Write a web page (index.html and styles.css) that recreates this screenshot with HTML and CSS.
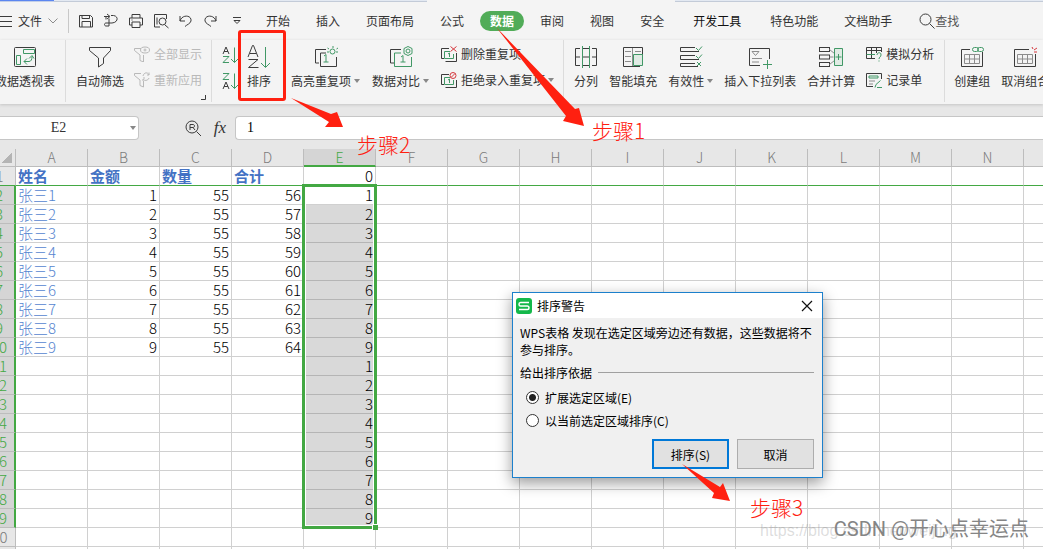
FILE: index.html
```html
<!DOCTYPE html>
<html lang="zh-CN">
<head>
<meta charset="utf-8">
<title>WPS表格</title>
<link rel="stylesheet" href="styles.css">
</head>
<body>
<div class="doc-tabs"><span class="doc-tab doc-tab-active"></span><span class="doc-tab doc-tab-wide"></span><span class="doc-tab doc-tab-current"></span><span class="doc-tab doc-tab-rest"></span></div>

<header class="menu">
  <button class="file"><svg class="i" width="12" height="12"><path d="M0 1.5h12M0 6.500h12M0 11.500h12"/></svg>文件<svg class="i soft" width="10" height="8"><path d="M.5 1.500l4.500 4.500 4.500-4.500"/></svg></button>
  <div class="quick">
    <button aria-label="保存"><svg class="i" width="16" height="16" viewBox="0 0 16 16"><path d="M1.500 2.500h11l2 2v9.500h-13zM4 2.500v3h7.500v-3M4 14V8.500h8.500V14"/></svg></button>
    <button aria-label="输出"><svg class="i" width="16" height="16" viewBox="0 0 16 16"><path d="M1 3.500h5M4 1l3 2.500L4 6M8 2.500c8-1 8 7 1 7.500H3c-2 0-2 3 0 3h3V5.500M3 3.500v3"/></svg></button>
    <button aria-label="打印"><svg class="i" width="16" height="16" viewBox="0 0 16 16"><path d="M4 5V1.500h8V5M4 12H1.500V5h13v7H12M4 9h8v5.500H4zM3.500 7h1"/></svg></button>
    <button aria-label="打印预览"><svg class="i" width="16" height="16" viewBox="0 0 16 16"><path d="M7 14H1.500V1.500h12V6M4 4.500v7M12 12l3.500 3"/><circle cx="9.500" cy="8.500" r="3.500"/></svg></button>
    <button aria-label="撤销"><svg class="i" width="16" height="16" viewBox="0 0 16 16"><path d="M2 3v5h5M2 8c2-7 12-6 11 0-1 3-4 3.500-6 5.500"/></svg></button>
    <button aria-label="恢复"><svg class="i" width="16" height="16" viewBox="0 0 16 16"><path d="M13 3v5H8M13 8C11 1 1 2 2 8c1 3 4 3.500 6 5.500"/></svg></button>
    <button aria-label="更多"><svg class="i" width="8" height="8" viewBox="0 0 8 8"><path d="M0 .5h8M1 3.500l3 3 3-3z"/></svg></button>
  </div>
  <nav class="tabs">
    <button>开始</button><button>插入</button><button>页面布局</button><button>公式</button><button class="active">数据</button><button>审阅</button><button>视图</button><button>安全</button><button class="strong">开发工具</button><button>特色功能</button><button>文档助手</button>
  </nav>
  <button class="search"><svg class="i" width="16" height="16" viewBox="0 0 16 16"><circle cx="6.500" cy="6.500" r="5.500"/><path d="M10.500 10.500l5 5"/></svg>查找</button>
</header>

<div class="ribbon">
  <div class="group first">
    <button class="big"><svg class="i" width="24" height="24" viewBox="0 0 24 24"><rect x="1.500" y="2.500" width="21" height="19" rx="1"/><path class="g" d="M10.500 4.500h11v4h-11zM3.500 10.500h4v9h-4zM11 16.500h5c2 0 3-2 3-5M14 13.500l-3 3 3 3M16 13.500l3-3 2 3"/></svg>数据透视表</button>
  </div>
  <div class="group filter">
    <button class="big"><svg class="i" width="24" height="24" viewBox="0 0 24 24"><path d="M1.500 2.500h21v3l-7 7.500v5.500l-5 3.500v-9l-9-7.500z"/></svg>自动筛选</button>
    <div class="stack">
      <button class="small" disabled><svg class="i" width="16" height="16" viewBox="0 0 16 16"><path d="M7 2.500H.5v2L6 9v5.500l3.500 1.500V9"/><ellipse cx="11" cy="4" rx="4.500" ry="3"/><circle cx="11" cy="4" r="1"/></svg>全部显示</button>
      <button class="small" disabled><svg class="i" width="16" height="16" viewBox="0 0 16 16"><path d="M7 1.500H.5v2L6 8v5.500L9.500 15V9M9 4c1-4 5-4 6-1V.5M15 3h-2M15 6c-1 3-5 3-6 1v2M9 6h2"/></svg>重新应用</button>
    </div>
    <svg class="launcher i" width="5" height="5"><path d="M0 4.500h4.500V0"/></svg>
  </div>
  <div class="group sorting">
    <div class="stack sorts">
      <button aria-label="升序"><svg class="i" width="17" height="18" viewBox="0 0 17 18"><path d="M1 8l3-7 3 7M2 5.500h4"/><path class="g" d="M1 10.500h6l-6 6h6M12.500 1.500v15M9 13l3.500 3.500L16 13"/></svg></button>
      <button aria-label="降序"><svg class="i" width="17" height="18" viewBox="0 0 17 18"><path class="g" d="M1 1.500h6l-6 6h6M12.500 1.500v15M9 13l3.500 3.500L16 13"/><path d="M1 17l3-7 3 7M2 14.500h4"/></svg></button>
    </div>
    <button class="big sort"><svg class="i" width="24" height="24" viewBox="0 0 24 24"><path d="M1 12L5.500.5h1L11 12M3 8.500h6M1.500 14.500h9.500l-9.500 8h10"/><path class="g" d="M18.500 2v20M14 18l4.500 4.500L23 18"/></svg>排序</button>
    <button class="big"><svg class="i" width="24" height="24" viewBox="0 0 24 24"><path d="M5 18H1.500V4.500H12M22.500 12v9.500h-16V8H12"/><path class="g" d="M10 11l2-1.500V17M9.500 17h5M19 1v2M13.500 3l1.500 1M24 3l-1.500 1M13 7h2M22 7h2"/><circle class="g" cx="18.500" cy="6.500" r="2.500"/></svg><span class="drop">高亮重复项</span></button>
    <button class="big"><svg class="i" width="24" height="24" viewBox="0 0 24 24"><path d="M5 18H1.500V4.500H12"/><path class="g" d="M22.500 12v9.500h-17V8H12M12 12l2-1.500V17M11.500 17h5M19 1.500l4 2v5l-4 2-4-2v-5z"/><circle class="g" cx="19" cy="6" r="2"/></svg><span class="drop">数据对比</span></button>
    <div class="stack">
      <button class="small"><svg class="i" width="16" height="16" viewBox="0 0 16 16"><path d="M3 12.500H.5v-10H8M15.500 7v8.500h-11"/><path class="g" d="M3.500 5.500H9M3.500 5.500v7h9V8M7 8l1.500-1v4"/><path class="r" d="M9.500.5l6 5M15.500.5l-6 5"/></svg>删除重复项</button>
      <button class="small"><svg class="i" width="16" height="16" viewBox="0 0 16 16"><path d="M3 12.500H.5v-10H8M15.500 8v7.500h-11"/><path class="g" d="M3.500 5.500H9M3.500 5.500v7h9V8M7 8l1.500-1v4"/><circle class="r" cx="12" cy="3.500" r="3"/><path class="r" d="M10 5.500l4-4"/></svg><span class="drop">拒绝录入重复项</span></button>
    </div>
  </div>
  <div class="group">
    <button class="big"><svg class="i" width="24" height="24" viewBox="0 0 24 24"><path d="M6 3.500H1.500v17H6M18 3.500h4.500v17H18M2 12h4M18 12h4M9 3.500h6M9 12h6M9 20.500h6"/><path class="g" d="M8.500 1v22M15.500 1v22"/></svg>分列</button>
    <button class="big"><svg class="i" width="24" height="24" viewBox="0 0 24 24"><path d="M19 21.500H2.500v-19h19V19"/><path class="soft" d="M4 6.500h6M14 6.500h6M4 11.500h6M4 16.500h6M11.500 3v18"/><path class="g tint" d="M12.500 9.500h9v11h-9z"/></svg>智能填充</button>
    <button class="big"><svg class="i" width="24" height="24" viewBox="0 0 24 24"><path d="M16 2.500H1.500v4H20M16 10.500H1.500v4H20M16 18.500H1.500v3H19"/><path class="g" d="M17 3l2.500 2.500L23 1.500M17 11l2.500 2.500L23 9.500M18 17l4 4M22 17l-4 4"/></svg><span class="drop">有效性</span></button>
    <button class="big"><svg class="i" width="24" height="24" viewBox="0 0 24 24"><path d="M12 20.500H1.500v-17h20V14"/><path class="soft" d="M4 6.500h7l-3.500 4zM4 13.500h10M4 17h7"/><path class="g" d="M19.500 15v9M15 19.500h9"/></svg>插入下拉列表</button>
    <button class="big"><svg class="i" width="24" height="24" viewBox="0 0 24 24"><rect x=".5" y="2.500" width="10" height="4"/><rect x=".5" y="10" width="10" height="4"/><rect x=".5" y="17.500" width="10" height="4"/><path class="soft" d="M10.500 4.500l5 4M10.500 12h4M10.500 19.500l5-4"/><path class="g tint" d="M15.500 3.500h8v17h-8zM19.500 9v6M16.500 12h6"/></svg>合并计算</button>
    <div class="stack">
      <button class="small"><svg class="i" width="16" height="16" viewBox="0 0 16 16"><path d="M9 12.500H.5V1.500h15V6M.5 4.500h15M5.500 1.500v11M10.500 1.500V7"/><path class="g" d="M.5 8.500H9M11 9c0-3 4.500-3 4 0 0 2-2 2-2 4M13 14.500v1"/></svg>模拟分析</button>
      <button class="small"><svg class="i" width="16" height="16" viewBox="0 0 16 16"><path d="M7 14.500H.5V1.500h15V7"/><path class="g" d="M3 4h9v2H3zM9 15.500l1-3 4.500-4M11 15.500h5"/><path class="soft" d="M3 9h6M3 12h4"/></svg>记录单</button>
    </div>
  </div>
  <div class="group last">
    <button class="big"><svg class="i" width="24" height="24" viewBox="0 0 24 24"><path d="M10 4.500H1.500v17h21V7"/><path class="soft" d="M4.500 9.500h15v9h-15zM4.500 14h15M9.500 9.500v9M14.500 9.500v9"/><rect class="g" x="12.500" y="2.500" width="6" height="4" rx="2"/><rect class="g" x="17.500" y="2.500" width="6" height="4" rx="2"/></svg>创建组</button>
    <button class="big"><svg class="i" width="24" height="24" viewBox="0 0 24 24"><path d="M16 4.500H1.500v17h21V9"/><path class="soft" d="M4.500 9.500h15v9h-15zM4.500 14h15M9.500 9.500v9M14.500 9.500v9"/><path class="r" d="M19 2l1 2M24 3l-3 2M21 7h3"/></svg>取消组合</button>
  </div>
</div>

<div class="formula-bar">
  <label class="name-box"><input value="E2" aria-label="名称框"></label>
  <button class="inspect" aria-label="浏览公式"><svg class="i" width="17" height="17" viewBox="0 0 17 17"><circle cx="7" cy="7" r="6"/><path d="M5 10V4.500h3c2 0 2 3 0 3H5M8 7.500l2 2.500M11.500 11.500l4.500 4.500"/></svg></button>
  <button class="fx">fx</button>
  <input class="formula" value="1" aria-label="编辑栏">
</div>

<main class="sheet">
<table class="grid">
<colgroup><col class="row-col"><col span="15" class="data-col"></colgroup>
<thead><tr><th class="corner"><th>A<th>B<th>C<th>D<th class="picked">E<th>F<th>G<th>H<th>I<th>J<th>K<th>L<th>M<th>N<th></tr></thead>
<tbody>
<tr class="titles"><th>1<td>姓名<td>金额<td>数量<td>合计<td class="num">0<td><td><td><td><td><td><td><td><td><td></tr>
</tbody>
<tbody class="selected">
<tr><th>2<td>张三1<td>1<td>55<td>56<td>1<td><td><td><td><td><td><td><td><td><td></tr>
<tr><th>3<td>张三2<td>2<td>55<td>57<td>2<td><td><td><td><td><td><td><td><td><td></tr>
<tr><th>4<td>张三3<td>3<td>55<td>58<td>3<td><td><td><td><td><td><td><td><td><td></tr>
<tr><th>5<td>张三4<td>4<td>55<td>59<td>4<td><td><td><td><td><td><td><td><td><td></tr>
<tr><th>6<td>张三5<td>5<td>55<td>60<td>5<td><td><td><td><td><td><td><td><td><td></tr>
<tr><th>7<td>张三6<td>6<td>55<td>61<td>6<td><td><td><td><td><td><td><td><td><td></tr>
<tr><th>8<td>张三7<td>7<td>55<td>62<td>7<td><td><td><td><td><td><td><td><td><td></tr>
<tr><th>9<td>张三8<td>8<td>55<td>63<td>8<td><td><td><td><td><td><td><td><td><td></tr>
<tr><th>10<td>张三9<td>9<td>55<td>64<td>9<td><td><td><td><td><td><td><td><td><td></tr>
<tr><th>11<td><td><td><td><td>1<td><td><td><td><td><td><td><td><td><td></tr>
<tr><th>12<td><td><td><td><td>2<td><td><td><td><td><td><td><td><td><td></tr>
<tr><th>13<td><td><td><td><td>3<td><td><td><td><td><td><td><td><td><td></tr>
<tr><th>14<td><td><td><td><td>4<td><td><td><td><td><td><td><td><td><td></tr>
<tr><th>15<td><td><td><td><td>5<td><td><td><td><td><td><td><td><td><td></tr>
<tr><th>16<td><td><td><td><td>6<td><td><td><td><td><td><td><td><td><td></tr>
<tr><th>17<td><td><td><td><td>7<td><td><td><td><td><td><td><td><td><td></tr>
<tr><th>18<td><td><td><td><td>8<td><td><td><td><td><td><td><td><td><td></tr>
<tr><th>19<td><td><td><td><td>9<td><td><td><td><td><td><td><td><td><td></tr>
</tbody>
<tbody>
<tr><th>20<td><td><td><td><td> <td><td><td><td><td> <td><td><td><td><td></tr>
<tr><th><td><td><td><td><td> <td><td><td><td><td> <td><td><td><td><td></tr>
</tbody>
</table>
<div class="selection"><span class="handle"></span></div>
</main>

<section class="dialog" role="dialog" aria-labelledby="dialog-title">
  <div class="title-bar">
    <svg width="16" height="16" viewBox="0 0 16 16"><rect width="16" height="16" rx="3" fill="#14b84a"/><path d="M13 4.500H4.500c-2 0-2 3.500 0 3.500h7c2 0 2 3.500 0 3.500H3" fill="none" stroke="#fff" stroke-width="1.500"/></svg>
    <h1 id="dialog-title">排序警告</h1>
    <button class="close" aria-label="关闭"><svg width="12" height="12" viewBox="0 0 12 12"><path d="M1 1l10 10M11 1L1 11" stroke="#111" stroke-width="1.200"/></svg></button>
  </div>
  <div class="dialog-body">
    <p>WPS表格 发现在选定区域旁边还有数据，这些数据将不参与排序。</p>
    <fieldset>
      <legend>给出排序依据</legend>
      <label><input type="radio" name="range" checked>扩展选定区域(E)</label>
      <label><input type="radio" name="range">以当前选定区域排序(C)</label>
    </fieldset>
    <div class="actions"><button class="primary">排序(S)</button><button>取消</button></div>
  </div>
</section>

<div class="mark-box"></div>
<svg class="arrows" width="1043" height="549" viewBox="0 0 1043 549"><path d="M496 27L575 109l4-1 5 18-21-5 3-5zM291 98L331 114l6-2 6 15h-18l4-5zM682 464L720 487l3-4 7 18-18-3 2-5z"/></svg>
<span class="step step-one">步骤1</span>
<span class="step step-two">步骤2</span>
<span class="step step-three">步骤3</span>
<span class="url-mark">https://blog.csdn.net/weijing</span>
<span class="author-mark">CSDN @开心点幸运点</span>
</body>
</html>
```

FILE: styles.css
```css
* { box-sizing: border-box; }
body {
  position: relative;
  display: flex;
  flex-direction: column;
  height: 100vh;
  margin: 0;
  overflow: hidden;
  background: #e7e7e7;
  color: #333;
  font: 12px/16px "Noto Sans CJK SC", sans-serif;
}
button, input { font: inherit; color: inherit; }
button {
  flex: none;
  padding: 0;
  border: 0;
  background: none;
  white-space: nowrap;
}
svg { flex: none; display: block; }
.i { fill: none; stroke: #3c3c3c; stroke-width: 1; }
.i .g { stroke: #419866; }
.i .r { stroke: #d5393f; }
.i.soft, .i .soft { stroke: #8c8c8c; }
.i .tint { fill: #e0ebe4; }

/* document tabs */
.doc-tabs { display: flex; flex: none; height: 2px; background: #f4f4f4; }
.doc-tab { border-bottom: 1px solid #c3cbd8; background: #e3e9f2; }
.doc-tab-active { width: 54px; background: #5b86f0; border-color: #c3cfe8; }
.doc-tab-wide { width: 373px; }
.doc-tab-current { width: 248px; background: #f4f4f4; border-color: #f4f4f4; }
.doc-tab-rest { flex: 1; }

/* menu row */
.menu { display: flex; flex: none; align-items: center; height: 38px; background: #f4f4f4; }
.file { display: flex; align-items: center; gap: 6px; padding-right: 10px; height: 24px; border-right: 1px solid #c8c8c8; }
.quick { display: flex; align-items: center; gap: 9px; width: 184px; padding-left: 9px; }
.quick button:last-child { padding-left: 5px; }
.tabs { display: flex; align-items: center; }
.tabs button { height: 20px; margin: 0 3px; padding: 0 10px; }
.tabs .active { border-radius: 10px; background: #51ac58; color: #fff; font-weight: bold; }
.tabs .strong { margin: 0 6px; color: #111; }
.search { display: flex; align-items: center; padding-left: 14px; color: #555; }

/* ribbon */
.ribbon {
  display: flex;
  flex: none;
  height: 64px;
  background: #f4f4f4;
  box-shadow: 0 1px 3px #c4c4c4;
}
.group { position: relative; display: flex; flex: none; gap: 11px; height: 62px; padding: 0 10px; border-right: 1px solid #dcdcdc; }
.first { margin-left: -5px; padding-left: 0; }
.filter { gap: 10px; padding-right: 9px; }
.sorting { gap: 12px; padding-right: 9px; }
.last { padding-left: 9px; border: 0; }
.big { display: flex; flex-direction: column; align-items: center; gap: 4px; padding: 5px 0; }
.stack { display: flex; flex-direction: column; gap: 10px; padding-top: 6px; }
.small { display: flex; align-items: center; gap: 4px; }
.small:disabled { color: #b9b9b9; }
.small:disabled .i { stroke: #b9b9b9; }
.sorts { gap: 8px; }
.sort { margin: 0 8px 0 -4px; }
.drop { display: flex; align-items: center; gap: 3px; }
.drop::after { content: ""; border: 3px solid transparent; border-top: 4px solid #888; border-bottom: 0; }
.launcher { position: absolute; right: 5px; bottom: 2px; }

/* formula bar */
.formula-bar { display: flex; flex: none; align-items: center; height: 45px; padding-top: 3px; }
.name-box { position: relative; flex: none; width: 139px; margin-right: 46px; }
.name-box::after { content: ""; position: absolute; right: 3px; top: 10px; border: 3px solid transparent; border-top: 4px solid #888; border-bottom: 0; }
.name-box input {
  width: 100%;
  height: 24px;
  padding: 0 21px 0 0;
  border: 1px solid #c6c6c6;
  border-left: 0;
  border-radius: 0 4px 4px 0;
  background: #fff;
  text-align: center;
  font: 14px "Liberation Serif", serif;
}
.fx { width: 18px; margin: 0 6px 0 9px; font: italic 17px/20px "Liberation Serif", serif; }
.formula {
  flex: 1;
  min-width: 0;
  height: 24px;
  padding: 0 11px;
  border: 1px solid #c6c6c6;
  border-right: 0;
  border-radius: 4px 0 0 4px;
  background: #fff;
  color: #000;
  font: 14px "Liberation Serif", serif;
}

/* sheet */
.sheet { position: relative; flex: 1; min-height: 0; overflow: hidden; background: #fff; }
.grid { width: 1112px; margin-left: -16px; border-spacing: 0; table-layout: fixed; color: #000; font-size: 15px; font-weight: 300; line-height: 18px; }
.row-col { width: 32px; }
.data-col { width: 72px; }
.grid th, .grid td { height: 19px; padding: 0 2px; border: solid #d0d0d0; border-width: 0 1px 1px 0; white-space: nowrap; }
.grid th { padding: 0; border-color: #bdbdbd; background: #e7e7e7; color: #7b7b7b; font-weight: 300; }
.grid thead th { height: 18px; font-size: 14px; line-height: 17px; }
.grid .picked { border-bottom: 2px solid #43a843; background: #d5d5d5; color: #43a843; line-height: 16px; }
.grid .corner { background: linear-gradient(135deg, transparent 50%, #b4b4b4 50%) right 3px bottom 3px / 11px 11px no-repeat #e7e7e7; }
.titles td { color: #4472c4; font-weight: bold; }
.grid .titles th, .grid .titles td { border-bottom-color: #43a843; }
.grid .num { color: #000; font-weight: 300; text-align: right; }
.selected td { text-align: right; }
.selected td:nth-child(2) { color: #5585d0; text-align: left; }
.grid .selected th { border-right: 2px solid #43a843; background: #d5d5d5; color: #43a843; }
.selected tr + tr td:nth-child(6) { border-bottom-color: #b5b5b5; background: #d9d9d9; }
.selection { position: absolute; left: 302px; top: 35px; width: 75px; height: 345px; border: 3px solid #43a843; box-shadow: inset 0 0 0 1px #fff; }
.handle { position: absolute; right: -4px; bottom: -4px; width: 6px; height: 6px; border: solid #fff; border-width: 1px 0 0 1px; background: #43a843; }

/* dialog */
.dialog {
  position: absolute;
  left: 512px;
  top: 292px;
  width: 311px;
  border: 1px solid #1c80cc;
  background: #f0f0f0;
  color: #000;
  box-shadow: 0 5px 14px rgba(0, 0, 0, .4);
}
.title-bar { display: flex; align-items: center; gap: 5px; height: 25px; padding: 0 9px 0 3px; background: #fff; }
.title-bar h1 { flex: 1; margin: 0; font-size: 12px; font-weight: normal; }
.dialog-body { padding: 6px 8px 8px 7px; line-height: 17px; }
.dialog-body p { margin: 0 -5px 6px 0; }
fieldset { margin: 0; padding: 0; border: 0; }
legend { display: flex; align-items: center; gap: 6px; width: 100%; padding: 0; }
legend::after { content: ""; flex: 1; height: 1px; background: #a0a0a0; }
fieldset label { display: flex; align-items: center; gap: 6px; height: 23px; padding-left: 6px; }
legend + label { margin-top: 5px; }
fieldset input {
  appearance: none;
  width: 13px;
  height: 13px;
  margin: 0;
  border: 1px solid #333;
  border-radius: 50%;
  background: #fff;
}
fieldset input:checked { background: radial-gradient(#222 0 3px, #fff 4px); }
.actions { display: flex; justify-content: flex-end; gap: 8px; margin-top: 7px; }
.actions button { width: 77px; height: 30px; border: 1px solid #adadad; background: #e1e1e1; }
.actions .primary { border: 2px solid #0078d7; }

/* annotations */
.mark-box { position: absolute; left: 238px; top: 30px; width: 48px; height: 71px; border: 3px solid #ff2010; border-radius: 3px; }
.arrows { position: absolute; left: 0; top: 0; fill: #ff2010; pointer-events: none; }
.step { position: absolute; color: #ff2010; font-size: 21px; font-weight: 300; line-height: 24px; }
.step-one { left: 592px; top: 118px; }
.step-two { left: 357px; top: 132px; }
.step-three { left: 750px; top: 495px; }
.url-mark, .author-mark { position: absolute; white-space: nowrap; pointer-events: none; }
.url-mark { left: 760px; bottom: 9px; color: rgba(120, 120, 120, .25); font: 16px/18px "Liberation Sans", sans-serif; }
.author-mark { right: 14px; bottom: 8px; color: #858585; font: 20px/24px Roboto, "Noto Sans CJK SC", sans-serif; }
```
